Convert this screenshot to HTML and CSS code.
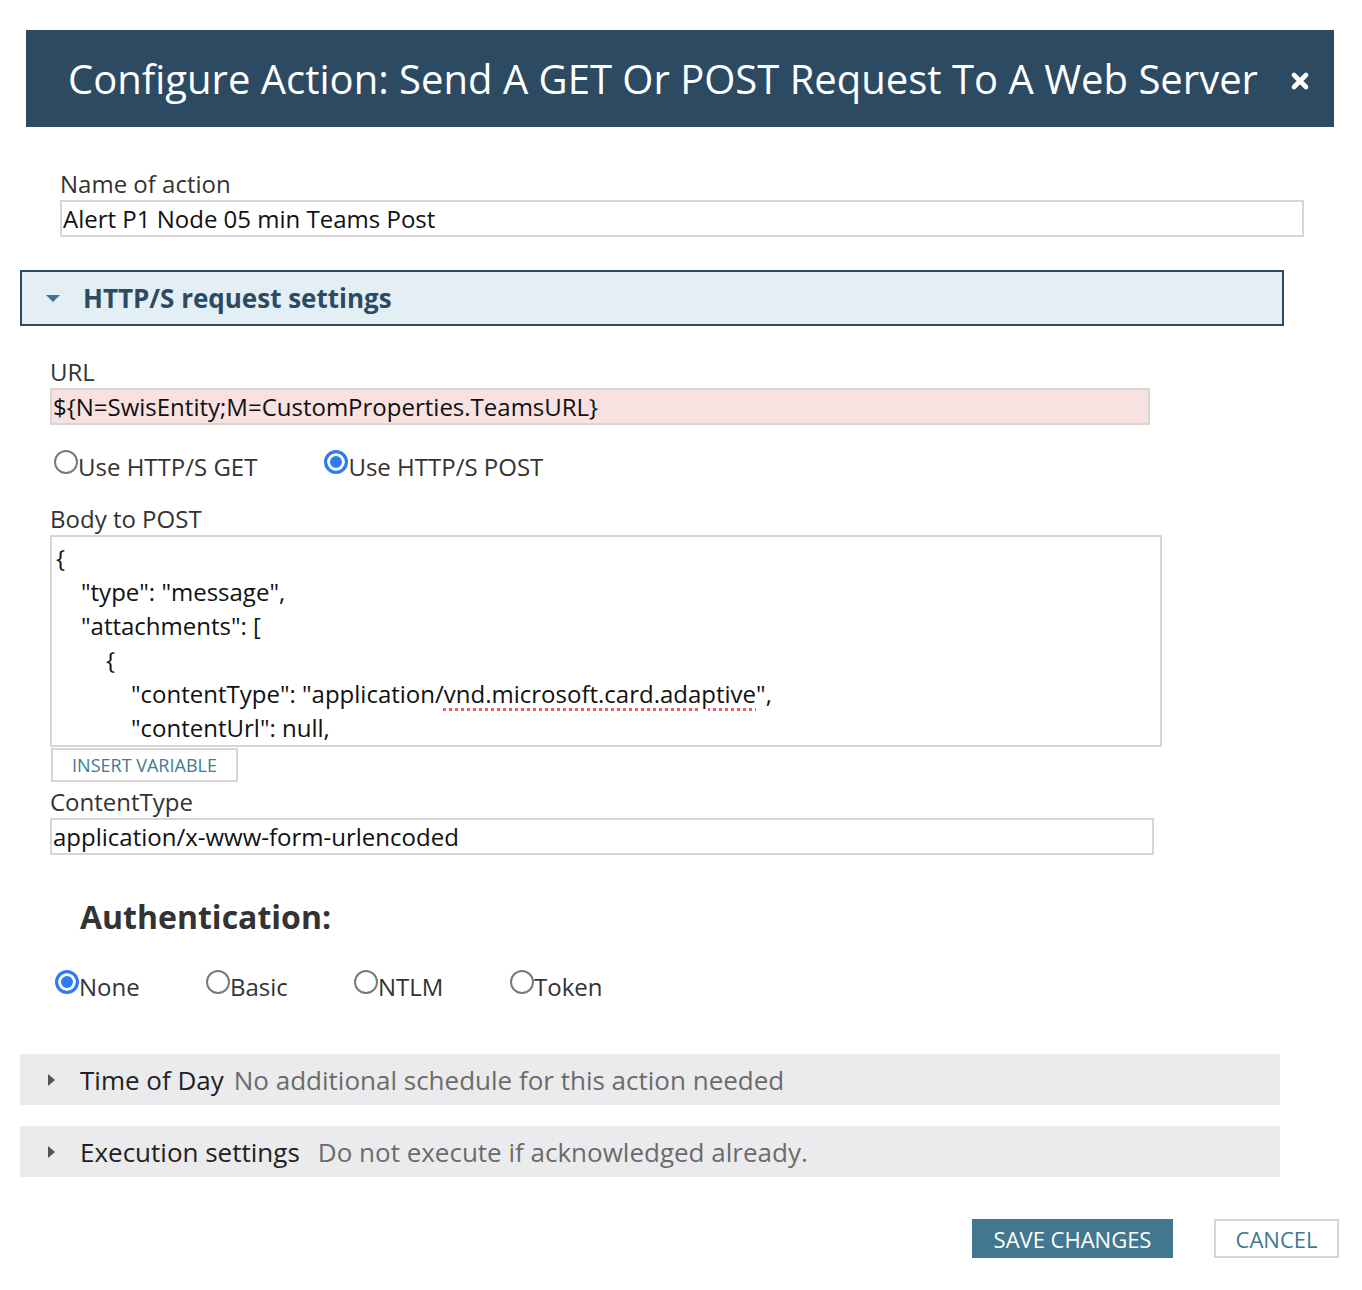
FILE: index.html
```html
<!DOCTYPE html>
<html lang="en">
<head>
    <meta charset="UTF-8">
    <title>Configure Action</title>
    <link rel="stylesheet" href="styles.css">
</head>
<body>
    <div class="dialog">
        <div class="dialog-header">
            <h1 class="dialog-title">Configure Action: Send A GET Or POST Request To A Web Server</h1>
            <button class="close-btn" aria-label="Close">
                <svg width="20" height="20" viewBox="0 0 20 20">
                    <path d="M4 4 L16 16 M16 4 L4 16" stroke="#fff" stroke-width="4.6" stroke-linecap="round"/>
                </svg>
            </button>
        </div>

        <div class="content">
            <div class="field name-field">
                <label class="field-label">Name of action</label>
                <div class="text-input name-input">Alert P1 Node 05 min Teams Post</div>
            </div>

            <div class="section-bar">
                <span class="caret-down"></span>
                <span class="section-title">HTTP/S request settings</span>
            </div>

            <div class="request">
                <div class="field">
                    <label class="field-label">URL</label>
                    <div class="text-input url-input">${N=SwisEntity;M=CustomProperties.TeamsURL}</div>
                </div>

                <div class="radio-row method-row">
                    <label class="radio"><span class="radio-dot"></span>Use HTTP/S GET</label>
                    <label class="radio"><span class="radio-dot checked"></span>Use HTTP/S POST</label>
                </div>

                <div class="field body-field">
                    <label class="field-label">Body to POST</label>
                    <div class="body-box">
<div class="code">{
<span class="i1">"type": "message",</span>
<span class="i1">"attachments": [</span>
<span class="i2">{</span>
<span class="i3">"contentType": "application/<span class="typo">vnd.microsoft.card.adaptive</span>",</span>
<span class="i3">"contentUrl": null,</span></div>
                    </div>
                    <button class="insert-btn">INSERT VARIABLE</button>
                </div>

                <div class="field">
                    <label class="field-label">ContentType</label>
                    <div class="text-input type-input">application/x-www-form-urlencoded</div>
                </div>
            </div>

            <h2 class="auth-title">Authentication:</h2>
            <div class="radio-row auth-row">
                <label class="radio"><span class="radio-dot checked"></span>None</label>
                <label class="radio"><span class="radio-dot"></span>Basic</label>
                <label class="radio"><span class="radio-dot"></span>NTLM</label>
                <label class="radio"><span class="radio-dot"></span>Token</label>
            </div>

            <div class="collapsed-bar">
                <span class="caret-right"></span>
                <span class="bar-title">Time of Day</span>
                <span class="bar-note">No additional schedule for this action needed</span>
            </div>
            <div class="collapsed-bar">
                <span class="caret-right"></span>
                <span class="bar-title">Execution settings</span>
                <span class="bar-note exec-note">Do not execute if acknowledged already.</span>
            </div>

            <div class="actions">
                <button class="btn btn-primary">SAVE CHANGES</button>
                <button class="btn btn-secondary">CANCEL</button>
            </div>
        </div>
    </div>
</body>
</html>
```

FILE: styles.css
```css
:root {
    --header-bg: #2c4a62;
    --accent: #41788f;
    --border-color: #d6d6d6;
    --text-color: #333;
    --radio-blue: #2f7bf5;
}

* {
    margin: 0;
    padding: 0;
    box-sizing: border-box;
    font-family: 'Open Sans', 'Noto Sans', sans-serif;
}

body {
    background: #fff;
    color: var(--text-color);
}

.dialog {
    width: 1362px;
    padding-top: 30px;
}

.dialog-header {
    display: flex;
    align-items: center;
    justify-content: space-between;
    width: 1308px;
    height: 97px;
    margin-left: 26px;
    padding: 0 24px 0 42px;
    background-color: var(--header-bg);
}

.dialog-title {
    color: #fff;
    font-size: 40px;
    font-weight: 400;
}

.close-btn {
    display: flex;
    border: none;
    background: none;
    cursor: pointer;
    margin-top: 4px;
}

.content {
    padding-left: 20px;
}

.field-label {
    display: block;
    font-size: 24px;
    line-height: 28px;
    color: var(--text-color);
}

.text-input {
    height: 37px;
    padding: 0 1px;
    border: 2px solid var(--border-color);
    font-size: 24px;
    line-height: 33px;
    color: #111;
    white-space: nowrap;
}

.name-field {
    margin-left: 40px;
    padding-top: 43px;
}

.name-field .field-label {
    margin-bottom: 2px;
}

.name-input {
    width: 1244px;
}

.section-bar {
    display: flex;
    align-items: center;
    width: 1264px;
    height: 56px;
    margin-top: 33px;
    padding-left: 24px;
    border: 2px solid var(--header-bg);
    background-color: #e4eef5;
}

.caret-down {
    width: 0;
    height: 0;
    border-left: 7px solid transparent;
    border-right: 7px solid transparent;
    border-top: 7px solid #3f7390;
    margin-right: 23px;
}

.section-title {
    font-size: 26px;
    font-weight: 700;
    color: var(--header-bg);
}

.request {
    margin-left: 30px;
    padding-top: 32px;
}

.request .field-label {
    margin-bottom: 2px;
}

.url-input {
    width: 1100px;
    background-color: #f8e1e1;
}

.radio-row {
    display: flex;
}

.radio {
    display: flex;
    align-items: flex-start;
    font-size: 24px;
    line-height: 30px;
    color: var(--text-color);
}

.radio-dot {
    width: 24px;
    height: 24px;
    margin-top: -2px;
    border: 2px solid #7a7a7a;
    border-radius: 50%;
    background: #fff;
}

.radio-dot.checked {
    border: 3px solid var(--radio-blue);
    background: var(--radio-blue);
    box-shadow: inset 0 0 0 3px #fff;
}

.method-row {
    margin: 27px 0 0 4px;
    gap: 67px;
}

.body-field {
    margin-top: 23px;
}

.body-box {
    width: 1112px;
    height: 212px;
    border: 2px solid var(--border-color);
    padding: 4px 4px;
    overflow: hidden;
}

.code {
    white-space: pre;
    font-size: 24px;
    line-height: 34px;
    color: #111;
}

.i1 { padding-left: 25px; }
.i2 { padding-left: 50px; }
.i3 { padding-left: 75px; }

.typo {
    text-decoration: underline dotted #e8615c;
    text-decoration-thickness: 3px;
    text-underline-offset: 5px;
}

.insert-btn {
    display: block;
    width: 187px;
    height: 34px;
    margin: 1px 0 0 1px;
    border: 2px solid var(--border-color);
    background: #fff;
    color: #3e7b95;
    font-size: 18px;
    cursor: pointer;
}

.body-field + .field {
    margin-top: 6px;
}

.type-input {
    width: 1104px;
}

.auth-title {
    margin: 42px 0 0 60px;
    font-size: 32px;
    font-weight: 700;
    line-height: 40px;
    color: var(--text-color);
}

.auth-row {
    margin: 35px 0 0 35px;
}

.auth-row .radio:nth-child(1) { width: 151px; }
.auth-row .radio:nth-child(2) { width: 148px; }
.auth-row .radio:nth-child(3) { width: 156px; }

.collapsed-bar {
    display: flex;
    align-items: center;
    width: 1260px;
    height: 51px;
    margin-top: 21px;
    padding-left: 28px;
    background-color: #ebebed;
    font-size: 26px;
}

.auth-row + .collapsed-bar {
    margin-top: 52px;
}

.caret-right {
    width: 0;
    height: 0;
    border-top: 6px solid transparent;
    border-bottom: 6px solid transparent;
    border-left: 7px solid #555;
    margin-right: 25px;
}

.bar-title {
    color: #222;
    margin-right: 10px;
}

.bar-note {
    color: #6b6b6b;
}

.exec-note {
    margin-left: 8px;
}

.actions {
    display: flex;
    justify-content: flex-end;
    gap: 41px;
    width: 1319px;
    margin-top: 42px;
}

.btn {
    height: 39px;
    font-size: 22px;
    cursor: pointer;
}

.btn-primary {
    width: 201px;
    border: none;
    background-color: var(--accent);
    color: #fff;
}

.btn-secondary {
    width: 125px;
    border: 2px solid var(--border-color);
    background: #fff;
    color: var(--accent);
}
```
